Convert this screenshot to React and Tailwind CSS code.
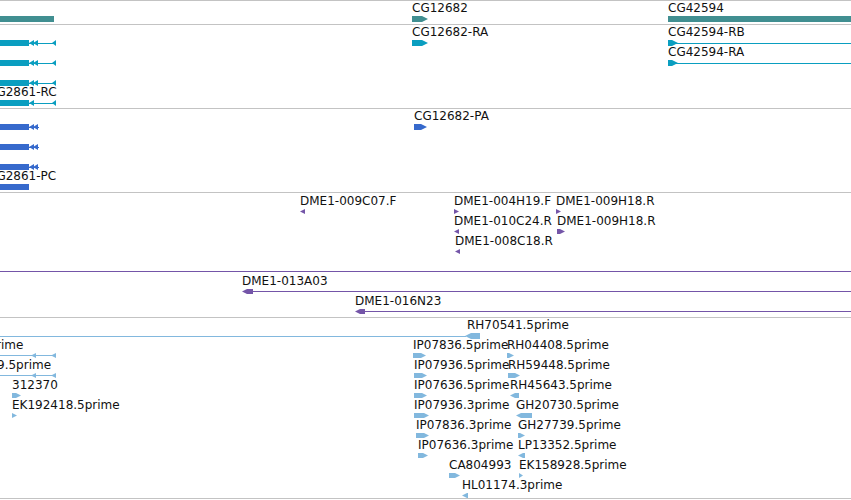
import React from "react";

const COL = {
  gene: { hex: "#418f91", bg: "bg-[#418f91]" },
  tx: { hex: "#0a9ec0", bg: "bg-[#0a9ec0]" },
  pr: { hex: "#3669cc", bg: "bg-[#3669cc]" },
  dme: { hex: "#7455a8", bg: "bg-[#7455a8]" },
  est: { hex: "#82b8de", bg: "bg-[#82b8de]" },
};

function Arrow({ w, h, dir = "r", fill, className = "" }) {
  const t = Math.min(w, h);
  const pts =
    dir === "r"
      ? `0,0 ${w - t},0 ${w},${h / 2} ${w - t},${h} 0,${h}`
      : `0,${h / 2} ${t},0 ${w},0 ${w},${h} ${t},${h}`;
  return (
    <svg className={"block shrink-0 " + className} width={w} height={h}>
      <polygon points={pts} fill={fill} />
    </svg>
  );
}

/* left-hand (off-screen) transcript / protein models */
function LeftModel({ fill, heads = 2, tail = true }) {
  return (
    <svg className="block" width={57} height={6}>
      <rect x="0" y="0" width="29" height="6" fill={fill} />
      <polygon points="29,3 34,0 34,6" fill={fill} />
      {heads === 2 && <polygon points="33,3 38,0 38,6" fill={fill} />}
      {heads === 2 && <rect x="29" y="3" width="10" height="1" fill={fill} />}
      {tail && <rect x="29" y="3" width="27" height="1" fill={fill} />}
      {tail && <polygon points="52,3 56,0 56,6" fill={fill} />}
    </svg>
  );
}

function LeftEst({ fill }) {
  return (
    <svg className="block" width={57} height={5}>
      <rect x="0" y="2" width="56" height="1" fill={fill} />
      <polygon points="31,2.5 36,0 36,5" fill={fill} />
      <polygon points="51,2.5 56,0 56,5" fill={fill} />
    </svg>
  );
}

function Glyph({ f, col }) {
  const h = f.h ?? 5;
  const hc = h === 6 ? "h-[6px]" : "h-[5px]";
  const mt = h === 6 ? "mt-[3px]" : "mt-[2px]";
  switch (f.g) {
    case "a":
      return <Arrow w={f.w} h={h} dir={f.d} fill={col.hex} />;
    case "al":
      return (
        <div className={"flex " + hc}>
          <Arrow w={f.w} h={h} dir={f.d} fill={col.hex} />
          <div className={"flex-1 h-px -ml-[4px] " + mt + " " + col.bg} />
        </div>
      );
    case "la":
      return (
        <div className={"flex " + hc}>
          <div className={"h-px " + mt + " " + col.bg} style={{ width: f.lw }} />
          <Arrow w={f.w} h={h} dir={f.d} fill={col.hex} className="-ml-[1px]" />
        </div>
      );
    case "bar":
      return <div className={hc + " " + col.bg} style={f.w ? { width: f.w } : undefined} />;
    case "line":
      return (
        <div className={"pt-[2px] " + hc}>
          <div className={"h-px " + col.bg} />
        </div>
      );
    case "m2":
      return <LeftModel fill={col.hex} />;
    case "m1":
      return <LeftModel fill={col.hex} heads={1} />;
    case "mp":
      return <LeftModel fill={col.hex} tail={false} />;
    case "est":
      return <LeftEst fill={col.hex} />;
    default:
      return null;
  }
}

function Feature({ f, col }) {
  return (
    <div className={"absolute top-0 flex flex-col " + (f.full ? "right-0" : "")} style={{ left: f.x }}>
      <div
        className="h-[14px] text-[12px] leading-[12px] whitespace-nowrap text-[#111]"
        style={f.lx ? { marginLeft: f.lx } : undefined}
      >
        {f.t}
      </div>
      <Glyph f={f} col={col} />
    </div>
  );
}

const TRACKS = [
  {
    key: "gene",
    col: COL.gene,
    cls: "h-[24px] pt-[1px]",
    rows: [
      [
        { x: 0, g: "bar", h: 6, w: 54 },
        { x: 412, t: "CG12682", g: "a", w: 16, h: 6 },
        { x: 668, t: "CG42594", g: "bar", h: 6, full: true },
      ],
    ],
  },
  {
    key: "tx",
    col: COL.tx,
    cls: "h-[84px] pt-[1px]",
    rows: [
      [
        { x: 0, g: "m2" },
        { x: 412, t: "CG12682-RA", g: "a", w: 16, h: 6 },
        { x: 668, t: "CG42594-RB", g: "al", w: 10, h: 6, full: true },
      ],
      [
        { x: 0, g: "m2" },
        { x: 668, t: "CG42594-RA", g: "al", w: 10, h: 6, full: true },
      ],
      [{ x: 0, g: "m2" }],
      [{ x: 0, t: "CG2861-RC", lx: -12, g: "m1" }],
    ],
  },
  {
    key: "pr",
    col: COL.pr,
    cls: "h-[84px] pt-[1px]",
    rows: [
      [
        { x: 0, g: "mp" },
        { x: 414, t: "CG12682-PA", g: "a", w: 13, h: 6 },
      ],
      [{ x: 0, g: "mp" }],
      [{ x: 0, g: "mp" }],
      [{ x: 0, t: "CG2861-PC", lx: -12, g: "bar", h: 6, w: 29 }],
    ],
  },
  {
    key: "dme",
    col: COL.dme,
    cls: "h-[125px] pt-[2px]",
    rows: [
      [
        { x: 300, t: "DME1-009C07.F", g: "a", w: 5, d: "l" },
        { x: 454, t: "DME1-004H19.F", g: "a", w: 5 },
        { x: 556, t: "DME1-009H18.R", g: "a", w: 5 },
      ],
      [
        { x: 454, t: "DME1-010C24.R", g: "a", w: 5, d: "l" },
        { x: 557, t: "DME1-009H18.R", g: "a", w: 8 },
      ],
      [{ x: 455, t: "DME1-008C18.R", g: "a", w: 5, d: "l" }],
      [{ x: 0, g: "line", full: true }],
      [{ x: 242, t: "DME1-013A03", g: "al", w: 11, d: "l", full: true }],
      [{ x: 355, t: "DME1-016N23", g: "al", w: 10, d: "l", full: true }],
    ],
  },
  {
    key: "est",
    col: COL.est,
    cls: "h-[182px] pt-[1px] border-b",
    rows: [
      [{ x: 0, t: "RH70541.5prime", lx: 467, g: "la", lw: 466, w: 15, h: 6, d: "l" }],
      [
        { x: 0, t: "rime", lx: -4, g: "est" },
        { x: 413, t: "IP07836.5prime", g: "a", w: 13 },
        { x: 507, t: "RH04408.5prime", g: "a", w: 7 },
      ],
      [
        { x: 0, t: "9.5prime", lx: -3, g: "est" },
        { x: 414, t: "IP07936.5prime", g: "a", w: 13 },
        { x: 508, t: "RH59448.5prime", g: "a", w: 12 },
      ],
      [
        { x: 12, t: "312370", g: "a", w: 9 },
        { x: 414, t: "IP07636.5prime", g: "a", w: 13 },
        { x: 510, t: "RH45643.5prime", g: "a", w: 9, d: "l" },
      ],
      [
        { x: 12, t: "EK192418.5prime", g: "a", w: 5 },
        { x: 414, t: "IP07936.3prime", g: "a", w: 15 },
        { x: 516, t: "GH20730.5prime", g: "a", w: 16, d: "l" },
      ],
      [
        { x: 416, t: "IP07836.3prime", g: "a", w: 13 },
        { x: 518, t: "GH27739.5prime", g: "a", w: 7 },
      ],
      [
        { x: 418, t: "IP07636.3prime", g: "a", w: 10 },
        { x: 518, t: "LP13352.5prime", g: "a", w: 7, d: "l" },
      ],
      [
        { x: 449, t: "CA804993", g: "a", w: 11 },
        { x: 519, t: "EK158928.5prime", g: "a", w: 4 },
      ],
      [{ x: 462, t: "HL01174.3prime", g: "a", w: 6, d: "l" }],
    ],
  },
];

export default function App() {
  return (
    <div className="w-[851px] h-[500px] bg-white overflow-hidden font-['DejaVu_Sans',sans-serif] flex flex-col">
      {TRACKS.map((tr) => (
        <section key={tr.key} className={"relative shrink-0 border-t border-[#c3c3c3] " + tr.cls}>
          {tr.rows.map((row, i) => (
            <div key={i} className="relative h-[20px]">
              {row.map((f, j) => (
                <Feature key={j} f={f} col={tr.col} />
              ))}
            </div>
          ))}
        </section>
      ))}
    </div>
  );
}
